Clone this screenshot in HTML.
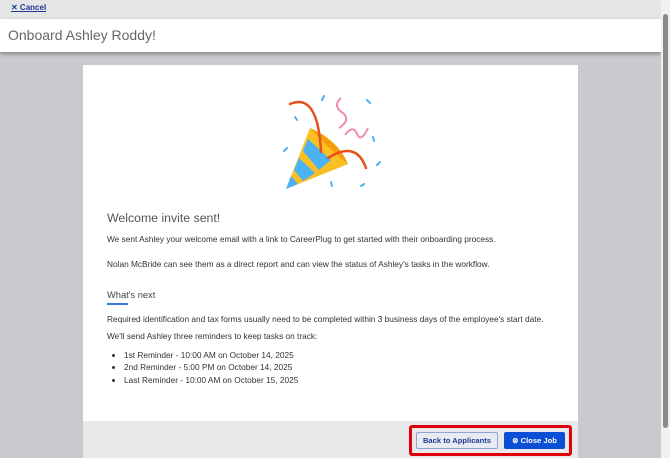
<!DOCTYPE html>
<html><head><meta charset="utf-8"><style>
*{margin:0;padding:0;box-sizing:border-box}
html,body{width:670px;height:458px;overflow:hidden;background:#c9cacd;font-family:"Liberation Sans",Arial,sans-serif;color:#333}
.top{position:absolute;left:0;top:0;width:661px;height:19px;background:#e6e6e8}
.top a{position:absolute;left:11px;top:3px;font-size:8px;color:#1d3b8f;text-decoration:underline;font-weight:bold}
.hdr{position:absolute;left:0;top:19px;width:661px;height:33px;background:#fff;box-shadow:0 2px 4px rgba(0,0,0,.35)}
.hdr h1{position:absolute;left:8px;top:8px;font-size:14px;font-weight:normal;color:#666}
.card{position:absolute;left:83px;top:65px;width:495px;height:393px;background:#fff}
.foot{position:absolute;left:0;top:356px;width:495px;height:37px;background:#e9e9eb}
.sb{position:absolute;left:661px;top:0;width:9px;height:458px;background:#f1f1f1}
.thumb{position:absolute;left:663px;top:14px;width:5px;height:414px;background:#8a8a8a;border-radius:3px}
.t{position:absolute;left:24px;font-size:8.3px;color:#333;white-space:nowrap}
h2{position:absolute;left:24px;top:146px;font-size:12.3px;font-weight:normal;color:#555}
h3{position:absolute;left:24px;top:225px;font-size:9.3px;font-weight:normal;color:#444}
.ul{position:absolute;left:24px;top:238px;width:21px;height:2px;background:#3a78d6}
ul{position:absolute;left:41px;top:284px;font-size:8.3px;line-height:12.3px}
.box{position:absolute;left:409px;top:425px;width:163px;height:31px;border:3px solid #e0000a;border-radius:3px}
.b1{position:absolute;left:416px;top:432px;width:82px;height:17px;border:1px solid #8fa6d4;background:#e8ebf2;color:#1d3b8f;font-size:7.6px;font-weight:bold;text-align:center;line-height:15px;border-radius:2px}
.b2{position:absolute;left:504px;top:432px;width:61px;height:17px;background:#0b4fd6;color:#fff;font-size:7.6px;font-weight:bold;text-align:center;line-height:17px;border-radius:2px}
</style></head><body>
<div class="top"><a>✕ Cancel</a></div>
<div class="hdr"><h1>Onboard Ashley Roddy!</h1></div>
<div class="card">
<svg style="position:absolute;left:187px;top:20px" width="120" height="110" viewBox="270 85 120 110">
<path d="M286 189 L310 128 L348 164 Z" fill="#fbbf24"/>
<path d="M303 151 L308 139 L331 160 L319 170Z" fill="#4ab3f4"/>
<path d="M294 170 L299 158 L315 173 L303 181Z" fill="#4ab3f4"/>
<path d="M286 189 L291 176 L298 184Z" fill="#4ab3f4"/>
<path d="M310 128 Q338 140 348 164 Q330 150 310 128Z" fill="#f59e0b"/>
<path d="M290 104 Q318 92 321 152" stroke="#e8501a" stroke-width="2.5" fill="none" stroke-linecap="round"/>
<path d="M328 158 Q356 140 366 168" stroke="#e8501a" stroke-width="2.5" fill="none" stroke-linecap="round"/>
<path d="M341 98 Q332 106 343 113 Q351 120 339 128" stroke="#f28ba8" stroke-width="2" fill="none"/>
<path d="M345 135 Q353 124 357 134 Q361 143 368 128" stroke="#f28ba8" stroke-width="2" fill="none"/>
<path d="M324 96 l-2 4 M367 100 l3 3 M295 117 l2 3 M287 148 l-3 3 M373 137 l1 4 M380 162 l-3 3 M331 182 l1 4 M361 186 l3 -2" stroke="#4ab3f4" stroke-width="2" stroke-linecap="round"/>
<path d="M324 96 l-2 4 M295 117 l2 3 M331 182 l1 4 M380 162 l-3 3" stroke="#f28ba8" stroke-width="2" stroke-linecap="round" opacity=".0"/>
</svg>
<h2>Welcome invite sent!</h2>
<div class="t" style="top:169px">We sent Ashley your welcome email with a link to CareerPlug to get started with their onboarding process.</div>
<div class="t" style="top:194px">Nolan McBride can see them as a direct report and can view the status of Ashley's tasks in the workflow.</div>
<h3>What's next</h3><div class="ul"></div>
<div class="t" style="top:249px">Required identification and tax forms usually need to be completed within 3 business days of the employee's start date.</div>
<div class="t" style="top:266px">We'll send Ashley three reminders to keep tasks on track:</div>
<ul><li>1st Reminder - 10:00 AM on October 14, 2025</li><li>2nd Reminder - 5:00 PM on October 14, 2025</li><li>Last Reminder - 10:00 AM on October 15, 2025</li></ul>
<div class="foot"></div>
</div>
<div class="box"></div>
<div class="b1">Back to Applicants</div>
<div class="b2">⊗ Close Job</div>
<div class="sb"></div><div class="thumb"></div>
</body></html>
